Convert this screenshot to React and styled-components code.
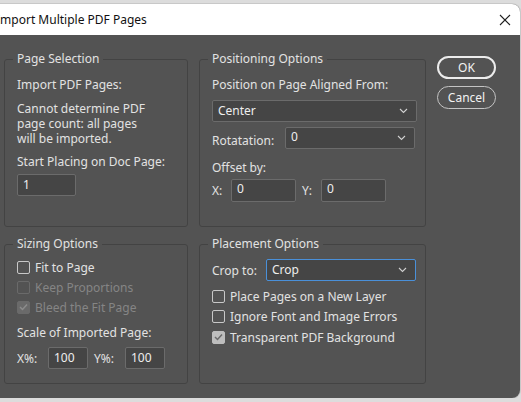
import React from "react";
import styled, { createGlobalStyle } from "styled-components";

const Global = createGlobalStyle`
  html, body { margin: 0; padding: 0; background: #dcdcdc; overflow: hidden; }
  body { font-family: "Noto Sans", "Segoe UI", sans-serif; font-size: 12px; }
`;

const Window = styled.div`
  margin: 4px 1px 0 -12px;
  width: 532px;
  height: 394px;
  border-radius: 0 8px 8px 0;
  overflow: hidden;
  display: flex;
  flex-direction: column;
  background: #535353;
  box-shadow: 0 0 0 1px #c8c8c8;
`;

const TitleBar = styled.div`
  height: 31px;
  flex: none;
  background: #ffffff;
  display: flex;
  align-items: center;
  justify-content: space-between;
  padding: 0 9px 0 8px;
  color: #111;
  font-size: 12px;
`;

const Close = styled.svg`
  width: 12px;
  height: 12px;
`;

const Body = styled.div`
  flex: 1;
  display: grid;
  grid-template-columns: 184px 227px 59px;
  grid-template-rows: 168px 140px;
  column-gap: 11px;
  row-gap: 17px;
  padding: 24px 0 0 16px;
  color: #e2e2e2;
`;

const Group = styled.div`
  position: relative;
  border: 1px solid #434343;
  border-radius: 3px;
  padding: ${(p) => p.$pad || "16px 12px 0"};
  display: flex;
  flex-direction: column;
`;

const Legend = styled.div`
  position: absolute;
  top: -9px;
  left: 8px;
  padding: 0 4px;
  background: #535353;
  line-height: 16px;
  font-size: 12px;
  color: #e2e2e2;
`;

const Text = styled.div`
  line-height: 15px;
  margin-top: ${(p) => p.$mt || 0}px;
  color: ${(p) => (p.$disabled ? "#858585" : "#e2e2e2")};
  white-space: nowrap;
`;

const Label = styled.span`
  width: ${(p) => p.$w}px;
  margin-left: ${(p) => p.$ml || 0}px;
  flex: none;
  line-height: 15px;
  white-space: nowrap;
  color: #e2e2e2;
`;

const Field = styled.div`
  box-sizing: border-box;
  width: ${(p) => p.$w}px;
  height: ${(p) => p.$h || 22}px;
  margin-top: ${(p) => p.$mt || 0}px;
  flex: none;
  background: #454545;
  border: 1px solid ${(p) => (p.$focus ? "#4a90d9" : "#6b6b6b")};
  border-radius: 2px;
  display: flex;
  align-items: center;
  justify-content: space-between;
  padding: 0 8px 0 5px;
  color: #eeeeee;
  font-size: 12px;
  line-height: 18px;
`;

const Value = styled.span`
  align-self: ${(p) => (p.$top ? "flex-start" : "center")};
  margin-top: ${(p) => (p.$top ? "0px" : "0")};
`;

const Row = styled.div`
  display: flex;
  align-items: center;
  gap: ${(p) => p.$gap || 0}px;
  margin-top: ${(p) => p.$mt || 0}px;
  justify-content: ${(p) => (p.$spread ? "space-between" : "flex-start")};
`;

const ChevronIcon = styled.svg`
  display: block;
  flex: none;
`;

const Chevron = () => (
  <ChevronIcon width="9" height="6" viewBox="0 0 9 6">
    <polyline points="1,1 4.5,4.5 8,1" fill="none" stroke="#d0d0d0" strokeWidth="1.1" />
  </ChevronIcon>
);

const Box = styled.span`
  box-sizing: border-box;
  width: 13px;
  height: 13px;
  border-radius: 2px;
  flex: none;
  border: 1px solid ${(p) => (p.$disabled ? "#6a6a6a" : p.$checked ? "#bdbdbd" : "#c8c8c8")};
  background: ${(p) => (p.$checked ? (p.$disabled ? "#6a6a6a" : "#bdbdbd") : "transparent")};
  display: flex;
  align-items: center;
  justify-content: center;
`;

const CheckRow = styled.div`
  display: flex;
  align-items: center;
  gap: 5px;
  height: 20px;
  color: ${(p) => (p.$disabled ? "#858585" : "#e2e2e2")};
  white-space: nowrap;
  margin-top: ${(p) => p.$mt || 0}px;
`;

const Check = ({ checked, disabled, label, mt }) => (
  <CheckRow $disabled={disabled} $mt={mt}>
    <Box $checked={checked} $disabled={disabled}>
      {checked && (
        <svg width="9" height="8" viewBox="0 0 9 8">
          <polyline
            points="1,4 3.5,6.5 8,1.5"
            fill="none"
            stroke={disabled ? "#8c8c8c" : "#6a6a6a"}
            strokeWidth="1.5"
          />
        </svg>
      )}
    </Box>
    {label}
  </CheckRow>
);

const Buttons = styled.div`
  grid-column: 3;
  grid-row: 1;
  margin-top: -3px;
  display: flex;
  flex-direction: column;
  gap: 7px;
`;

const Button = styled.button`
  box-sizing: border-box;
  width: 59px;
  height: 23px;
  border-radius: 12px;
  background: transparent;
  border: ${(p) => (p.$primary ? "2px solid #ececec" : "1px solid #c4c4c4")};
  color: #f2f2f2;
  font-family: "Noto Sans", "Segoe UI", sans-serif;
  font-size: 12px;
  padding: 0;
  line-height: 18px;
`;

export default function App() {
  return (
    <>
      <Global />
      <Window>
        <TitleBar>
          <span>Import Multiple PDF Pages</span>
          <Close viewBox="0 0 12 12">
            <path d="M1 1 L11 11 M11 1 L1 11" stroke="#222" strokeWidth="1.1" />
          </Close>
        </TitleBar>
        <Body>
          <Group $pad="17px 12px 0">
            <Legend>Page Selection</Legend>
            <Text>Import PDF Pages:</Text>
            <Text $mt={9}>
              Cannot determine PDF
              <br />
              page count: all pages
              <br />
              will be imported.
            </Text>
            <Text $mt={8}>Start Placing on Doc Page:</Text>
            <Field $w={59} $h={22} $mt={5}>
              <Value>1</Value>
            </Field>
          </Group>

          <Group $pad="17px 10px 0 12px">
            <Legend>Positioning Options</Legend>
            <Text>Position on Page Aligned From:</Text>
            <Field $w={205} $mt={8}>
              <Value>Center</Value>
              <Chevron />
            </Field>
            <Row $mt={5} $spread>
              <Label $w={70} style={{ marginTop: 4 }}>Rotatation:</Label>
              <Field $w={130}>
                <Value $top>0</Value>
                <Chevron />
              </Field>
            </Row>
            <Text $mt={11}>Offset by:</Text>
            <Row $mt={4}>
              <Label $w={19}>X:</Label>
              <Field $w={65} $h={23}>
                <Value $top>0</Value>
              </Field>
              <Label $w={19} $ml={6}>Y:</Label>
              <Field $w={65} $h={23}>
                <Value $top>0</Value>
              </Field>
            </Row>
          </Group>

          <Buttons>
            <Button $primary>OK</Button>
            <Button>Cancel</Button>
          </Buttons>

          <Group $pad="12px 12px 0">
            <Legend>Sizing Options</Legend>
            <Check label="Fit to Page" />
            <Check label="Keep Proportions" disabled />
            <Check label="Bleed the Fit Page" disabled checked />
            <Text $mt={8}>Scale of Imported Page:</Text>
            <Row $mt={7}>
              <Label $w={31}>X%:</Label>
              <Field $w={40}>
                <Value>100</Value>
              </Field>
              <Label $w={31} $ml={6}>Y%:</Label>
              <Field $w={40}>
                <Value>100</Value>
              </Field>
            </Row>
          </Group>

          <Group $pad="14px 10px 0 12px">
            <Legend>Placement Options</Legend>
            <Row $spread>
              <Label $w={54}>Crop to:</Label>
              <Field $w={150} $focus>
                <Value>Crop</Value>
                <Chevron />
              </Field>
            </Row>
            <Check label="Place Pages on a New Layer" mt={5} />
            <Check label="Ignore Font and Image Errors" />
            <Check label="Transparent PDF Background" checked mt={1} />
          </Group>
        </Body>
      </Window>
    </>
  );
}
